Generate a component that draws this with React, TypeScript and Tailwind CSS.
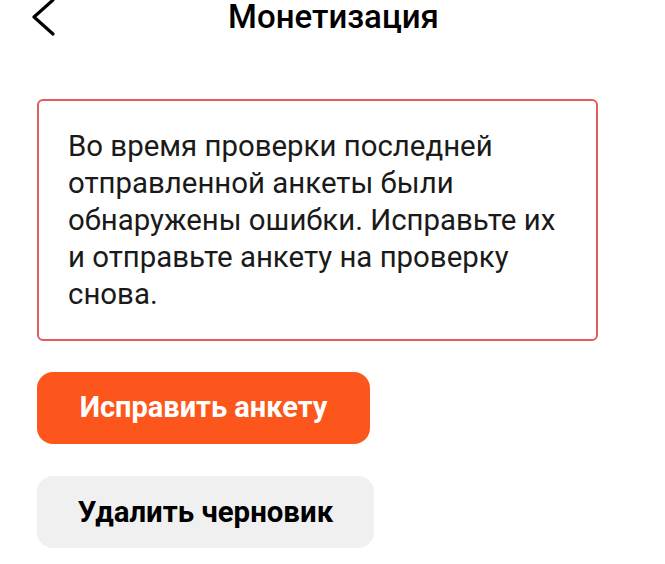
export default function App() {
  return (
    <div
      className="w-[665px] h-[564px] bg-white overflow-hidden"
      style={{ fontFamily: 'Roboto, "Noto Sans", sans-serif' }}
    >
      {/* Header */}
      <div className="relative h-[60px] flex justify-center">
        <svg
          className="absolute left-[30px] -top-[2px]"
          width="28"
          height="40"
          viewBox="0 0 28 40"
          fill="none"
          stroke="#000"
          strokeWidth="3.2"
          strokeLinecap="round"
          strokeLinejoin="round"
        >
          <path d="M23 2 L4 19 L23 36" />
        </svg>
        <h1 className="text-[33px] leading-[34px] font-medium text-black pl-[2px]">Монетизация</h1>
      </div>

      <div className="px-[37px] pt-[39px]">
        {/* Error card */}
        <div className="w-[561px] h-[242px] border-2 border-[#e35b5b] rounded-[6px] pl-[29px] pr-[28px] pt-[27px]">
          <p className="text-[29.4px] leading-[37px] text-[#1a1a1a]">
            Во время проверки последней отправленной анкеты были обнаружены ошибки. Исправьте их и
            отправьте анкету на проверку снова.
          </p>
        </div>

        {/* Actions */}
        <div className="flex flex-col gap-[32px] mt-[31px]">
          <button className="w-[333px] h-[72px] rounded-[16px] bg-[#fd561d] text-white text-[29px] font-bold flex items-center justify-center">
            Исправить анкету
          </button>
          <button className="w-[337px] h-[72px] rounded-[16px] bg-[#f0f0f0] text-black text-[29.4px] font-bold flex items-center justify-center">
            Удалить черновик
          </button>
        </div>
      </div>
    </div>
  );
}
